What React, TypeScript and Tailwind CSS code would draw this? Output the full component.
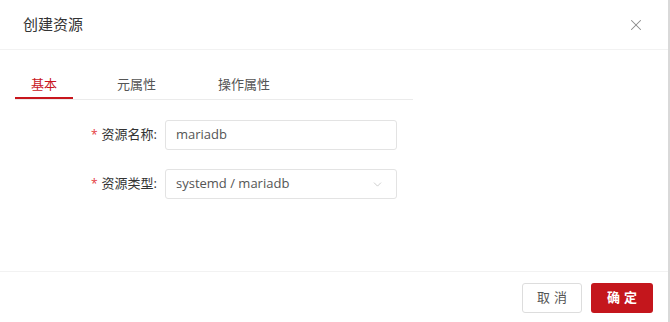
import { X, ChevronDown } from "lucide-react";

const TABS = [
  { label: "基本", active: true },
  { label: "元属性", active: false },
  { label: "操作属性", active: false },
];

const FONT = "font-['Open_Sans','Noto_Sans_CJK_SC',sans-serif]";

const FormRow = ({ label, children }: { label: string; children: React.ReactNode }) => (
  <div className="flex items-center h-[30px]">
    <div className="w-[165px] flex justify-end items-center pr-[8px] text-[13px] text-[#333]">
      <span className="text-[#e4393c] mr-[4px] text-[12px]">*</span>
      <span>{label}:</span>
    </div>
    {children}
  </div>
);

export default function App() {
  return (
    <div className={`w-[670px] h-[322px] bg-white flex ${FONT}`}>
      <div className="flex-1 flex flex-col">
        {/* Header */}
        <div className="h-[50px] flex items-center justify-between pl-[23px] pr-[23px] border-b border-[#f2f2f2]">
          <span className="text-[15px] text-[#333]">创建资源</span>
          <X size={18} strokeWidth={1.4} className="text-[#8a8a8a]" />
        </div>

        {/* Body */}
        <div className="flex-1 pl-[15px] pt-[20px]">
          <div className="w-[398px] flex border-b border-[#ebebeb] h-[30px]">
            {TABS.map((tab, i) => (
              <div
                key={tab.label}
                className={`px-[16px] text-[13px] leading-[28px] ${i === 0 ? "mr-[28px]" : "mr-[30px]"} ${
                  tab.active ? "text-[#c8161d] border-b-2 border-[#c8161d]" : "text-[#555]"
                }`}
              >
                {tab.label}
              </div>
            ))}
          </div>

          <div className="flex flex-col gap-[19px] pt-[20px] -ml-[15px]">
            <FormRow label="资源名称">
              <div className="w-[232px] h-[30px] border border-[#e3e3e3] rounded-[3px] flex items-center px-[10px] text-[13px] text-[#555]">
                mariadb
              </div>
            </FormRow>
            <FormRow label="资源类型">
              <div className="w-[232px] h-[30px] border border-[#e3e3e3] rounded-[3px] flex items-center justify-between pl-[10px] pr-[12px] text-[13px] text-[#555]">
                <span>systemd / mariadb</span>
                <ChevronDown size={13} strokeWidth={1.3} className="text-[#bbb]" />
              </div>
            </FormRow>
          </div>
        </div>

        {/* Footer */}
        <div className="h-[51px] border-t border-[#f2f2f2] flex items-center justify-end gap-[9px] pr-[15px] pt-[1px]">
          <button className="w-[60px] h-[30px] border border-[#ddd] rounded-[3px] bg-white text-[13px] text-[#555] tracking-[4px] pl-[4px]">
            取消
          </button>
          <button className="w-[62px] h-[30px] rounded-[3px] bg-[#c4161c] text-[13px] text-white font-bold tracking-[4px] pl-[4px]">
            确定
          </button>
        </div>
      </div>
      <div className="w-[2px] bg-[#d9d9d9]" />
    </div>
  );
}
